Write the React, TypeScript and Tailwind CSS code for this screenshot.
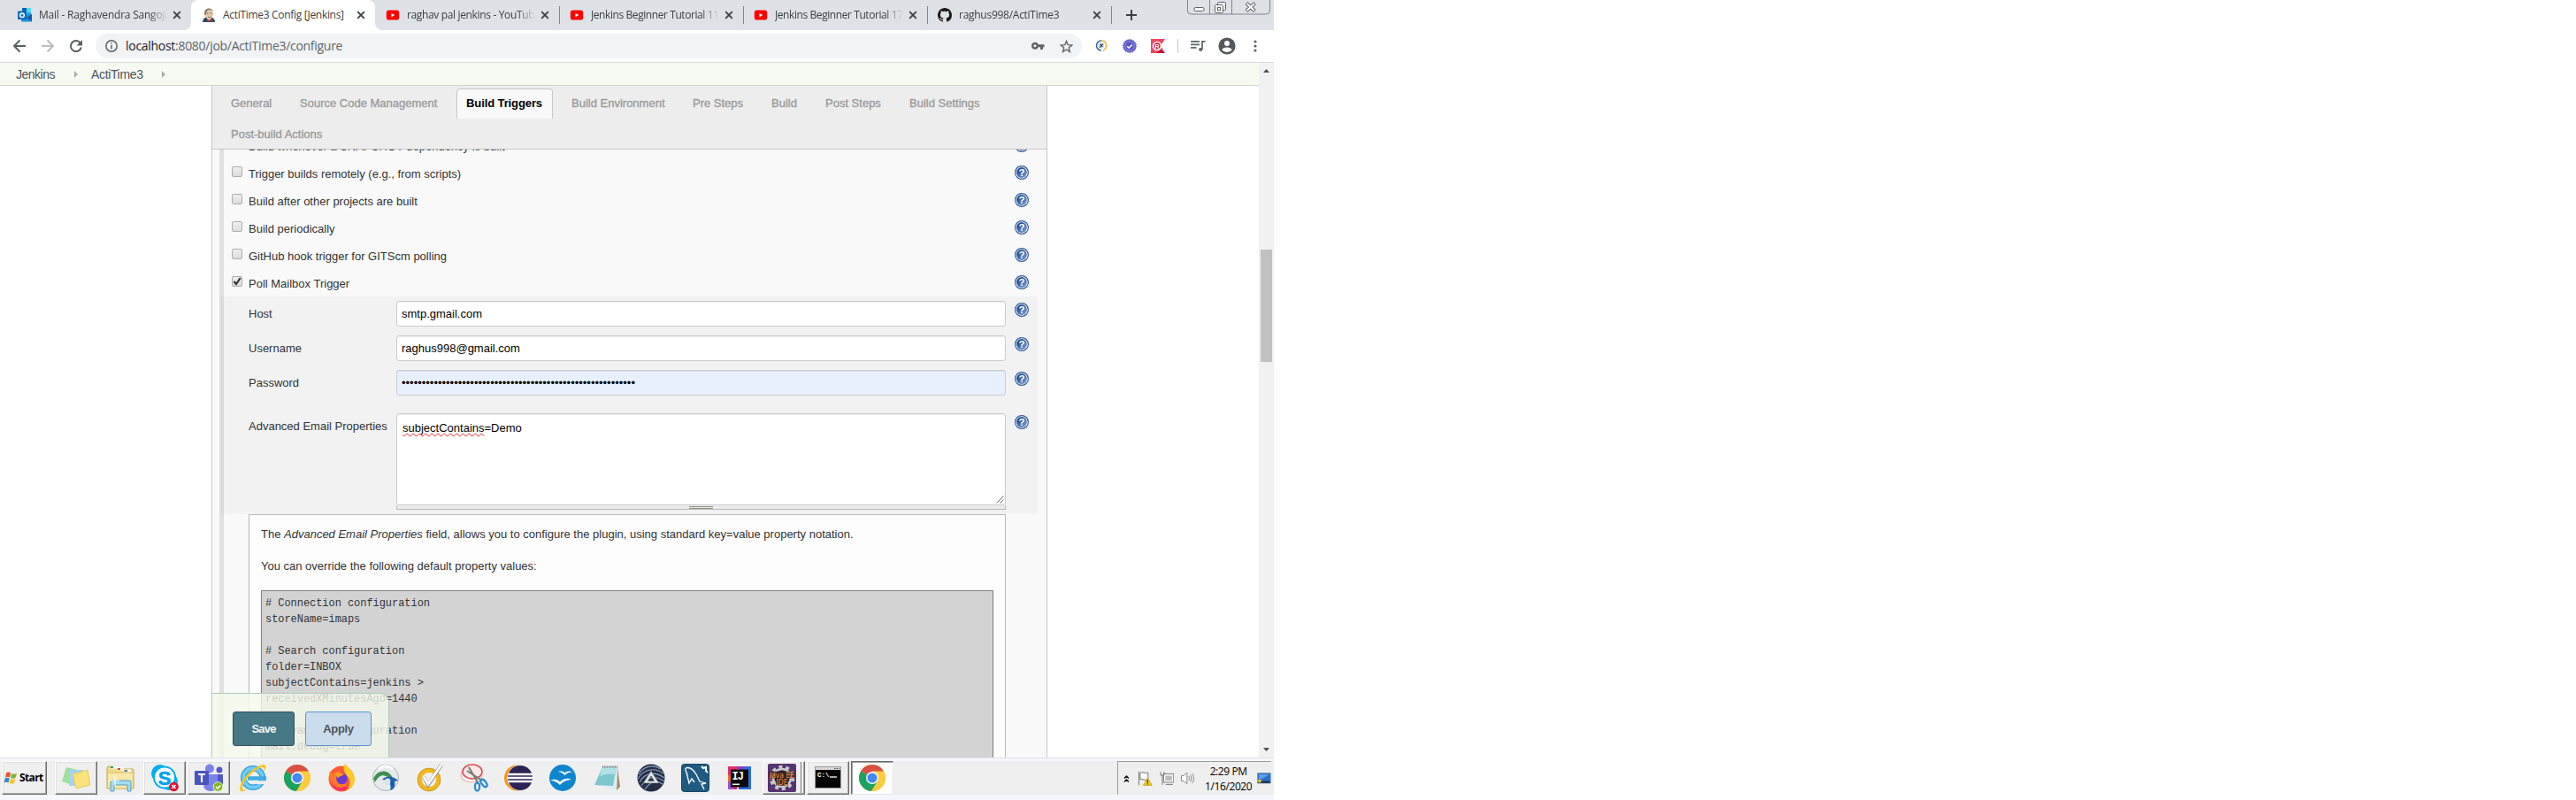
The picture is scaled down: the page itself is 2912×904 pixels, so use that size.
import React, { type ReactNode } from 'react';

const UI = "font-['Open_Sans','Noto_Sans',sans-serif]";
const PAGE = "font-['Liberation_Sans',Arial,sans-serif]";

/* ---------- small drawings ---------- */

function Cross() {
  return (
    <svg width="10" height="10" viewBox="0 0 10 10" className="shrink-0">
      <path d="M1.2 1.2 8.8 8.8M8.8 1.2 1.2 8.8" stroke="#3c4043" strokeWidth="1.9" />
    </svg>
  );
}

function Outlook() {
  return (
    <svg width="16" height="16" viewBox="0 0 16 16" className="shrink-0">
      <path d="M5 0h10v10H5z" fill="#28a8ea" />
      <path d="M5 0h5v5H5z" fill="#0a64ad" />
      <path d="M10 0h5v5h-5z" fill="#50d9ff" />
      <path d="M5 8l11-1v8.500H4z" fill="#1490df" />
      <path d="M16 7v8l-6-4z" fill="#0f5ba8" />
      <rect y="3.500" width="10" height="9.500" rx="1" fill="#0f6cbd" />
      <circle cx="5" cy="8.200" r="2.300" fill="none" stroke="#fff" strokeWidth="1.500" />
    </svg>
  );
}

function Jenkins() {
  return (
    <svg width="16" height="16" viewBox="0 0 16 16" className="shrink-0">
      <path d="M1 16c0-3 2-5 4-5.500h6c3 1 4 3 4 5.500z" fill="#33495f" />
      <path d="M5 10l3 5 3-4z" fill="#f4f1ec" />
      <ellipse cx="8.200" cy="6.500" rx="4.800" ry="6" fill="#e3c8aa" />
      <path d="M3.200 8C2.500 2.500 5 .5 8.200.5c2 0 4 1 4.800 3-2-1.500-4.500-2-6-1C5 4 5.200 6 4.500 8z" fill="#857a70" />
      <path d="M5.500 6h2M9.500 6h2M7 10c1 .8 2.500.8 3.500 0" stroke="#6b4b38" strokeWidth=".8" fill="none" />
      <path d="M6.500 12.500l2.500 1 3-1.300v3l-3-1-2.500 1z" fill="#d33833" />
    </svg>
  );
}

function YouTube() {
  return (
    <svg width="16" height="16" viewBox="0 0 16 16" className="shrink-0">
      <rect x=".8" y="2.600" width="14.400" height="11" rx="2.800" fill="#f00" />
      <path d="M6.500 5.900v4.400L10.300 8.100z" fill="#fff" />
    </svg>
  );
}

function GitHub() {
  return (
    <svg width="16" height="16" viewBox="0 0 16 16" className="shrink-0">
      <path
        fill="#1b1817"
        d="M8 0C3.580 0 0 3.580 0 8c0 3.540 2.290 6.530 5.470 7.590.4.070.55-.17.55-.38 0-.19-.01-.82-.01-1.490-2.010.37-2.530-.49-2.690-.94-.09-.23-.48-.94-.82-1.130-.28-.15-.68-.52-.01-.53.63-.01 1.080.58 1.230.82.72 1.210 1.870.87 2.330.66.070-.52.28-.87.51-1.070-1.780-.2-3.640-.89-3.640-3.950 0-.87.31-1.590.82-2.150-.08-.2-.36-1.020.08-2.120 0 0 .67-.21 2.200.82.64-.18 1.320-.27 2-.27s1.360.09 2 .27c1.530-1.040 2.200-.82 2.200-.82.44 1.100.16 1.920.08 2.120.51.56.82 1.270.82 2.150 0 3.070-1.870 3.750-3.650 3.950.29.25.54.73.54 1.480 0 1.070-.01 1.930-.01 2.200 0 .21.15.46.55.38A8.010 8.010 0 0 0 16 8c0-4.420-3.580-8-8-8z"
      />
    </svg>
  );
}

function Help() {
  return (
    <svg width="16" height="16" viewBox="0 0 16 16" className="shrink-0">
      <defs>
        <linearGradient id="helpFill" x1="0" y1="0" x2="1" y2="1">
          <stop offset="0.200" stopColor="#1f4a8c" />
          <stop offset="1" stopColor="#7ea6d8" />
        </linearGradient>
      </defs>
      <circle cx="8" cy="8" r="7.400" fill="#fff" stroke="#2f5a9b" strokeWidth="1.200" />
      <circle cx="8" cy="8" r="5.900" fill="url(#helpFill)" />
      <text x="8" y="12" textAnchor="middle" fontSize="11.500" fontWeight="700" fill="#fff" fontFamily="Liberation Sans, sans-serif">
        ?
      </text>
    </svg>
  );
}

/* ---------- browser chrome ---------- */

type Tab = { title: string; icon: ReactNode; active?: boolean; sep?: boolean; track: string };

const tabs: Tab[] = [
  { title: 'Mail - Raghavendra Sangoji', icon: <Outlook />, track: 'tracking-[-0.22px]' },
  { title: 'ActiTime3 Config [Jenkins]', icon: <Jenkins />, active: true, track: 'tracking-[-0.3px]' },
  { title: 'raghav pal jenkins - YouTube', icon: <YouTube />, sep: true, track: 'tracking-[-0.35px]' },
  { title: 'Jenkins Beginner Tutorial 11 -', icon: <YouTube />, sep: true, track: 'tracking-[-0.42px]' },
  { title: 'Jenkins Beginner Tutorial 17 -', icon: <YouTube />, sep: true, track: 'tracking-[-0.42px]' },
  { title: 'raghus998/ActiTime3', icon: <GitHub />, sep: true, track: 'tracking-[-0.27px]' },
];

function TabStrip() {
  return (
    <div className="flex h-[34px] bg-[#dee1e6] pl-[8px]">
      {tabs.map((t, i) => (
        <div key={i} className={`relative flex h-[34px] w-[208px] shrink-0 items-center pl-[12px] ${t.active ? 'rounded-t-[8px] bg-white' : ''}`}>
          {t.active && (
            <>
              <svg className="absolute bottom-0 -left-[8px]" width="8" height="8" viewBox="0 0 8 8"><path d="M8 0v8H0a8 8 0 0 0 8-8z" fill="#fff" /></svg>
              <svg className="absolute -right-[8px] bottom-0" width="8" height="8" viewBox="0 0 8 8"><path d="M0 0v8h8a8 8 0 0 1-8-8z" fill="#fff" /></svg>
            </>
          )}
          {t.icon}
          <div className={`ml-[8px] w-[145px] shrink-0 overflow-hidden text-[12px] leading-[18px] whitespace-nowrap text-[#3c4043] ${t.active ? '' : '[mask-image:linear-gradient(to_right,black_86%,transparent)]'} ${UI} ${t.track}`}>
            {t.title}
          </div>
          <span className="ml-[6px] flex"><Cross /></span>
          {t.sep && <div className="ml-[11px] h-[20px] w-px shrink-0 bg-[#80868b]" />}
        </div>
      ))}
      <svg className="mt-[11px] ml-[17px]" width="12" height="12" viewBox="0 0 12 12">
        <path d="M6 0v12M0 6h12" stroke="#3c4043" strokeWidth="2" />
      </svg>
      <svg className="ml-[57px]" width="94" height="18" viewBox="0 0 94 18" fill="none">
        <path d="M.5 0v12q0 4 4 4h85q4 0 4-4V0M25.500 0v16M50.500 0v16" stroke="#7f858c" />
        <rect x="8" y="8.500" width="11" height="4" rx="1.500" fill="#fff" stroke="#5b6067" />
        <rect x="34.500" y="2.500" width="9" height="9" rx="1" fill="#fff" stroke="#5b6067" />
        <rect x="31.500" y="5.500" width="9" height="9" rx="1" fill="#fff" stroke="#5b6067" />
        <rect x="34.500" y="8.500" width="3" height="3" stroke="#5b6067" />
        <path d="M67 3.500l9.500 9M76.500 3.500l-9.500 9" stroke="#5b6067" strokeWidth="4" />
        <path d="M67.500 4l8.500 8M76 4l-8.500 8" stroke="#fff" strokeWidth="2" />
      </svg>
    </div>
  );
}

function Toolbar() {
  return (
    <div className="flex h-[36px] items-center bg-white pl-[14px]">
      <svg width="80" height="16" viewBox="0 0 80 16" fill="none" strokeWidth="2">
        <path d="M15 8H2.500M8.500 1.500 2 8l6.500 6.500" stroke="#5a5e63" />
        <path d="M33 8h12.500M39.500 1.500 46 8l-6.500 6.500" stroke="#babcbe" />
        <path d="M77 4.800A6 6 0 1 0 77.800 9.500" stroke="#5a5e63" />
        <path d="M79 1v6.500h-6.500z" fill="#5a5e63" />
      </svg>
      <div className="ml-[14px] flex h-[28px] w-[1115px] items-center rounded-full bg-[#f1f3f4] pl-[11px]">
        <svg width="14" height="14" viewBox="0 0 14 14" fill="none" stroke="#5f6368" strokeWidth="1.500">
          <circle cx="7" cy="7" r="6.200" />
          <path d="M7 6v4.500M7 3.200v1.500" />
        </svg>
        <div className={`ml-[9px] w-[989px] text-[14px] leading-[20px] tracking-[-0.29px] whitespace-nowrap text-[#5f6368] ${UI}`}>
          <span className="text-[#202124]">localhost</span>:8080/job/ActiTime3/configure
        </div>
        <svg className="ml-[35px]" width="15" height="10" viewBox="0 0 15 10">
          <path d="M4 .8a4 4 0 1 0 3.800 5.400H10V9h3V6.200h1.500V3.200H7.800A4 4 0 0 0 4 .8zM4 6.200a1.500 1.500 0 1 1 0-3 1.500 1.500 0 0 1 0 3z" fill="#5f6368" />
        </svg>
        <svg className="ml-[17px]" width="15" height="15" viewBox="0 0 15 15">
          <path d="M7.500 1.500l1.700 4.200 4.600.3-3.500 3 1.100 4.400-3.900-2.400-3.900 2.400 1.100-4.400-3.500-3 4.600-.3z" fill="none" stroke="#5f6368" strokeWidth="1.400" />
        </svg>
      </div>
      <svg className="ml-[15px]" width="14" height="14" viewBox="0 0 14 14" fill="none">
        <path d="M7 1A5.500 5.500 0 1 0 7 12" stroke="#2d67ae" strokeWidth="1.500" />
        <path d="M7 1a5.500 5.500 0 0 1 3 10.200" stroke="#f3b535" strokeWidth="1.500" />
        <path d="M8.500 12l1.500 1.800V11" fill="#f3b535" />
        <circle cx="7" cy="6.500" r="3.200" fill="#bfe3f5" />
        <path d="M5 8.700l4-4M5.700 4.700l2.600 3.300" stroke="#334" strokeWidth="1.100" />
      </svg>
      <svg className="ml-[17px]" width="16" height="16" viewBox="0 0 16 16" fill="none">
        <circle cx="8" cy="8" r="7.200" fill="#5a55c8" stroke="#6f6ad6" strokeWidth="1.500" strokeDasharray="1.500 1" />
        <circle cx="8" cy="8" r="5.200" stroke="#a9a6ec" strokeWidth=".8" />
        <path d="M5.200 8.200l2 2 3.600-3.800" stroke="#fff" strokeWidth="1.500" />
      </svg>
      <svg className="ml-[16px]" width="16" height="16" viewBox="0 0 16 16">
        <path d="M0 0h16l-5 7.500 5 8.500H0z" fill="#f0455f" />
        <path d="M6 16l5-4 5 4z" fill="#c0122f" />
        <circle cx="7" cy="8" r="5.300" fill="#fff" />
        <circle cx="7" cy="8" r="3.700" fill="#c91435" />
        <text x="7" y="10.800" fontSize="7.500" fontWeight="700" textAnchor="middle" fill="#fff" fontFamily="Liberation Sans, sans-serif">R</text>
      </svg>
      <div className="ml-[14px] h-[16px] w-px bg-[#c4c7ca]" />
      <svg className="ml-[14px]" width="17" height="14" viewBox="0 0 17 14" fill="none" stroke="#5f6368" strokeWidth="1.700">
        <path d="M0 1.800h10M0 5.300h10M0 8.800h6.500M13 11V1.800h3.500" />
        <circle cx="11.200" cy="11" r="2.100" fill="#5f6368" stroke="none" />
      </svg>
      <svg className="ml-[14px]" width="20" height="20" viewBox="0 0 20 20">
        <circle cx="10" cy="10" r="9.600" fill="#54585d" />
        <circle cx="10" cy="7" r="3" fill="#fff" />
        <path d="M4.200 14.200c1.300-2 3.500-2.700 5.800-2.700s4.500.7 5.800 2.700A7 7 0 0 1 10 17a7 7 0 0 1-5.800-2.800z" fill="#fff" />
      </svg>
      <svg className="ml-[20px]" width="4" height="14" viewBox="0 0 4 14" fill="#5f6368">
        <circle cx="2" cy="2" r="1.600" /><circle cx="2" cy="7" r="1.600" /><circle cx="2" cy="12" r="1.600" />
      </svg>
    </div>
  );
}

/* ---------- Jenkins page ---------- */

function Crumb() {
  return (
    <svg width="4" height="8" viewBox="0 0 4 8"><path d="M0 0l4 4-4 4z" fill="#acaca8" /></svg>
  );
}

const navItems = [
  ['General', 'w-[78px]'],
  ['Source Code Management', 'w-[170px]'],
  ['Build Triggers', ''],
  ['Build Environment', 'w-[137px]'],
  ['Pre Steps', 'w-[89px]'],
  ['Build', 'w-[61px]'],
  ['Post Steps', 'w-[95px]'],
  ['Build Settings', 'w-[100px]'],
];

function ConfigNav() {
  return (
    <div className="h-[72px] border-b border-[#c8c8c8] bg-[#ededed] pl-[21px] text-[13px] leading-[17px] text-[#9b9b9b] [-webkit-text-stroke:0.35px_#9b9b9b]">
      <div className="flex h-[37px] pt-[3px]">
        {navItems.map(([name, w]) =>
          name === 'Build Triggers' ? (
            <div key={name} className="mr-[21px] ml-[7px] h-[34px] w-[109px] shrink-0 rounded-t-[4px] border border-b-0 border-[#c8c8c8] bg-[#f9f9f9] pt-[7px] pl-[10px] font-bold tracking-[-0.1px] whitespace-nowrap text-black [-webkit-text-stroke:0]">
              {name}
            </div>
          ) : (
            <div key={name} className={`shrink-0 pt-[8px] whitespace-nowrap ${w}`}>{name}</div>
          ),
        )}
      </div>
      <div className="pt-[9px]">Post-build Actions</div>
    </div>
  );
}

const triggers = [
  'Build whenever a SNAPSHOT dependency is built',
  'Trigger builds remotely (e.g., from scripts)',
  'Build after other projects are built',
  'Build periodically',
  'GitHub hook trigger for GITScm polling',
  'Poll Mailbox Trigger',
];

function TriggerRow({ label, checked }: { label: string; checked: boolean }) {
  return (
    <div className="flex h-[31px] pt-[7px] pl-[9px]">
      <div className="mt-px h-[12px] w-[12px] rounded-[2px] border border-[#acacac] bg-linear-to-b from-[#efefef] to-[#dcdcdc]">
        {checked && (
          <svg width="10" height="10" viewBox="0 0 10 10"><path d="M1.500 5l2.500 3L8.800 1" fill="none" stroke="#333" strokeWidth="2.200" /></svg>
        )}
      </div>
      <div className="ml-[7px] w-[866px] pt-px text-[13px] leading-[17px] text-[#333]">{label}</div>
      <Help />
    </div>
  );
}

function Field({ label, value, dots }: { label: string; value: string; dots?: boolean }) {
  return (
    <div className="flex h-[39px]">
      <div className="w-[167px] pt-[6px] text-[13px] leading-[17px]">{label}</div>
      <div className={`h-[29px] w-[689px] rounded-[3px] border border-[#ccc] pt-[5px] pl-[5px] text-[13px] leading-[17px] text-black shadow-[inset_0_1px_1px_rgba(0,0,0,0.075)] ${dots ? 'bg-[#e8f0fe]' : 'bg-white'}`}>
        {value}
      </div>
      <div className="mt-[2px] ml-[10px]"><Help /></div>
    </div>
  );
}

const pre = `# Connection configuration
storeName=imaps

# Search configuration
folder=INBOX
subjectContains=jenkins >
receivedXMinutesAgo=1440

# Javamail configuration
mail.debug=true`;

function MailboxPanel() {
  return (
    <div className="-ml-[3px] h-[246px] w-[923px] bg-black/[0.027] pt-[5px] pl-[31px] text-[#333]">
      <Field label="Host" value="smtp.gmail.com" />
      <Field label="Username" value="raghus998@gmail.com" />
      <Field label="Password" value={'•'.repeat(58)} dots />
      <div className="mt-[10px] flex">
        <div className="w-[167px] pt-[6px] text-[13px] leading-[17px] whitespace-nowrap">Advanced Email Properties</div>
        <div className="w-[689px]">
          <div className="flex h-[104px] justify-between rounded-[3px] border border-[#ccc] bg-white pt-[7px] pl-[6px] text-[13px] leading-[17px] text-black shadow-[inset_0_1px_1px_rgba(0,0,0,0.075)]">
            <div>
              <span className="underline decoration-[#e8262a] decoration-wavy decoration-[0.8px] underline-offset-[1px] [text-decoration-skip-ink:none]">subjectContains</span>=Demo
            </div>
            <svg className="mr-px mb-px self-end" width="9" height="9" viewBox="0 0 9 9"><path d="M.5 8.500l8-8M4.500 8.500l4-4" stroke="#555" strokeWidth=".9" /></svg>
          </div>
          <div className="flex h-[5px] justify-center border border-t-0 border-[#b9b9b9] bg-[#ececec]">
            <div className="mt-px h-[3px] w-[27px] border-y border-[#8f8f85]" />
          </div>
        </div>
        <div className="mt-[2px] ml-[10px]"><Help /></div>
      </div>
    </div>
  );
}

function HelpBox() {
  return (
    <div className="ml-[28px] h-[320px] w-[856px] border border-[#bbb] bg-[#fdfdfd] pt-[13px] pl-[13px] text-[13px] leading-[18px] text-[#333]">
      <p>The <i>Advanced Email Properties</i> field, allows you to configure the plugin, using standard key=value property notation.</p>
      <p className="mt-[18px]">You can override the following default property values:</p>
      <pre className="mt-[18px] h-[260px] w-[828px] border border-[#7f7f7f] bg-[#d3d3d3] pt-[5px] pl-[4px] font-['Liberation_Mono',monospace] text-[12px] leading-[18px] tracking-[-0.05px]">{pre}</pre>
    </div>
  );
}

function JenkinsPage() {
  return (
    <div className={`flex h-[786px] shrink-0 border-t border-[#d9dbe0] ${PAGE}`}>
      <div className="relative h-[785px] w-[1423px] overflow-hidden">
        <div className="flex h-[26px] items-center border-b border-[#d3d6cc] bg-[#f6faf2] pl-[18px] text-[14px] leading-[18px] text-[#4d545d]">
          <span className="w-[66px] tracking-[-0.5px]">Jenkins</span>
          <Crumb />
          <span className="ml-[15px] w-[80px] tracking-[-0.35px]">ActiTime3</span>
          <Crumb />
        </div>
        <div className="ml-[239px] h-[759px] w-[945px] overflow-hidden border-x border-[#c8c8c8] bg-[#f9f9f9]">
          <ConfigNav />
          <div className="h-[687px] overflow-hidden pl-[8px]">
            <div className="-mt-[20px] border-l-[5px] border-[#e0e0e0]">
              {triggers.map((t) => (
                <TriggerRow key={t} label={t} checked={t === 'Poll Mailbox Trigger'} />
              ))}
              <MailboxPanel />
              <HelpBox />
            </div>
          </div>
        </div>
        <div className="absolute bottom-0 left-[239px] flex h-[73px] w-[201px] gap-[12px] rounded-tr-[10px] border border-b-0 border-[#abcebd] bg-[#f5f9eb]/80 pt-[20px] pl-[23px] text-[13px] font-bold">
          <div className="flex h-[39px] w-[70px] items-center justify-center rounded-[3px] border border-[#30525f] bg-[#467886] tracking-[-0.8px] text-[#f4f7f8]">Save</div>
          <div className="flex h-[39px] w-[75px] items-center justify-center rounded-[3px] border border-[#5c92d2] bg-[#cbdcec] tracking-[-0.3px] text-[#4d545d]">Apply</div>
        </div>
      </div>
      <div className="flex w-[17px] flex-col items-center bg-[#f1f1f1]">
        <svg className="mt-[7px]" width="7" height="4" viewBox="0 0 7 4"><path d="M0 4l3.500-4L7 4z" fill="#505050" /></svg>
        <div className="mt-[200px] h-[127px] w-[13px] bg-[#c1c1c1]" />
        <svg className="mt-auto mb-[7px]" width="7" height="4" viewBox="0 0 7 4"><path d="M0 0l3.500 4L7 0z" fill="#505050" /></svg>
      </div>
    </div>
  );
}

/* ---------- taskbar ---------- */

function Icon({ children }: { children: ReactNode }) {
  return <svg width="32" height="32" viewBox="0 0 32 32" fill="none">{children}</svg>;
}

const Chrome = () => (
  <Icon>
    <circle cx="16" cy="16" r="15" fill="#fccb3f" />
    <path d="M16 16 3 8.500A15 15 0 0 1 29 8.500z" fill="#d94f44" />
    <path d="M29 8.500H16v7z" fill="#d94f44" />
    <path d="M3 8.500A15 15 0 0 0 15 31l7-11.500L16 16z" fill="#1ba261" />
    <path d="M29 8.500H16l6.500 11.500L15 31A15 15 0 0 0 29 8.500z" fill="#fccb3f" />
    <circle cx="16" cy="16" r="7" fill="#fff" />
    <circle cx="16" cy="16" r="5.600" fill="#4688f1" />
  </Icon>
);

const taskIcons: { style: 'plain' | 'raised' | 'stack' | 'pressed'; icon: ReactNode }[] = [
  { style: 'raised', icon: (
    <Icon>
      <path d="M5 4l17 4-5 18L0 20z" fill="#9fe0a0" /><path d="M9 7h15v18H8z" fill="#a6d2f6" />
      <path d="M12 12l17-5 3 17-16 4z" fill="#fae27a" stroke="#e5c64f" strokeWidth=".8" />
    </Icon>) },
  { style: 'plain', icon: (
    <Icon>
      <path d="M1 5q0-2 2-2h9l2 3h16q1 0 1 2v20H1z" fill="#f2dc8c" stroke="#c9a646" />
      <path d="M5 4h8M13 6h7M21 8h7" stroke="#fff" strokeWidth="3" />
      <path d="M5 4h3" stroke="#2aa34a" strokeWidth="2" /><path d="M13 6h3" stroke="#d34b31" strokeWidth="2" /><path d="M21 8h3" stroke="#3380d3" strokeWidth="2" />
      <path d="M1.500 10h29v18h-29z" fill="#f8e8a8" stroke="#d9bd63" />
      <path d="M5 31V21q0-2 2-2h19q2 0 2 2v10h-4v-7H9v7z" fill="#a4dcf2" stroke="#559fc4" />
      <path d="M10 13v12M5 19h10" stroke="#fff" strokeWidth="1.200" />
    </Icon>) },
  { style: 'raised', icon: (
    <Icon>
      <circle cx="11" cy="11" r="10" fill="#00aff0" /><circle cx="21" cy="20" r="10" fill="#00aff0" /><circle cx="16" cy="15.500" r="13" fill="#00aff0" />
      <circle cx="16" cy="15.500" r="11" fill="#fff" />
      <text x="16" y="23.500" fontSize="22" fontWeight="700" textAnchor="middle" fill="#00a5e8" stroke="#00a5e8" strokeWidth=".6" fontFamily="Liberation Sans, sans-serif">S</text>
      <circle cx="26.500" cy="26" r="5.300" fill="#df1233" /><path d="M24.500 24l4 4M28.500 24l-4 4" stroke="#fff" strokeWidth="1.500" />
    </Icon>) },
  { style: 'raised', icon: (
    <Icon>
      <circle cx="17" cy="5.500" r="5" fill="#7b83eb" /><circle cx="28" cy="7" r="3.500" fill="#5059c9" />
      <path d="M22 12h10v10q0 6-7 6z" fill="#5059c9" /><path d="M10 12h16v11q0 8-8 8t-8-8z" fill="#7b83eb" />
      <rect y="8" width="16" height="16" rx="1" fill="#4b53bc" /><path d="M4 12h8M8 12v9" stroke="#fff" strokeWidth="2.200" />
      <circle cx="26.500" cy="26" r="5.300" fill="#84b81b" stroke="#e8f5d0" /><path d="M24 26l2 2 3.200-3.500" stroke="#fff" strokeWidth="1.600" />
    </Icon>) },
  { style: 'plain', icon: (
    <Icon>
      <circle cx="16" cy="16" r="10.800" stroke="#2f9fda" strokeWidth="6.500" /><circle cx="16" cy="16" r="10.800" stroke="#6fcdf5" strokeWidth="4" />
      <path d="M10 16.500h21" stroke="#3fabe2" strokeWidth="4.500" /><path d="M18 19.500h14v3.500H20z" fill="#efefef" />
      <path d="M2 31C-2 26 10 5 28 1c4 0 2 5 0 8 1-4 0-6-3-5C12 9 3 24 4 28q1 2 5 0c-3 3-6 4-7 3z" fill="#f8c51c" />
    </Icon>) },
  { style: 'plain', icon: <Chrome /> },
  { style: 'plain', icon: (
    <Icon>
      <circle cx="16" cy="17" r="14.500" fill="#ff5a36" />
      <path d="M20 0c4 5 11 9 11 18 0 6-5 12-11 13 5-4 7-9 4-15-3-5-8-8-4-16z" fill="#ffc928" />
      <path d="M3 8l3 4 6-4 2 5c-3 8 3 11 8 9-1 4-6 6-11 4C5 24 1 15 3 8z" fill="#ff7a22" />
      <path d="M3 21c3 9 14 13 22 6l-6-1c-6 3-13 0-16-5z" fill="#f32f66" />
      <circle cx="16.500" cy="17" r="6.300" fill="#6d3ad0" /><path d="M8 11c4-3 8 0 11 1-3 2-5 2-7 4z" fill="#ff9a1f" />
    </Icon>) },
  { style: 'plain', icon: (
    <Icon>
      <circle cx="16" cy="16" r="14.500" fill="#e6eaec" stroke="#aab0b5" />
      <path d="M2 17C7 6 19 6 24 16c2 5 1 10-1 13 1-6 0-10-4-13C14 11 8 13 4 21z" fill="#3f9150" />
      <path d="M12 18c4-5 13-4 18 1l-4 1c1 3 0 7-2 9l-3 1c2-6-1-11-9-12z" fill="#1c5fae" />
      <path d="M15 18c2-2 5-2 6 0 1 3 0 5-2 8-3-2-5-4-4-8z" fill="#dde4ea" />
      <path d="M8 6c5-4 11-4 16 0" stroke="#fff" strokeWidth="3" />
    </Icon>) },
  { style: 'plain', icon: (
    <Icon>
      <circle cx="15" cy="18" r="10.500" fill="#f1f1f1" stroke="#f2b81d" strokeWidth="5" /><circle cx="15" cy="18" r="12.900" stroke="#b98310" strokeWidth=".7" />
      <path d="M9 15l5 9L29 1" stroke="#9b9b9b" strokeWidth="4.200" /><path d="M9 15l5 8L29 1" stroke="#fff" strokeWidth="2.800" />
    </Icon>) },
  { style: 'plain', icon: (
    <Icon>
      <ellipse cx="13" cy="13" rx="12" ry="8" stroke="#f3b4b4" strokeWidth="1.200" />
      <ellipse cx="14" cy="9" rx="11" ry="8" fill="#f6e8e8" stroke="#e2474b" strokeWidth="1.500" />
      <path d="M10 4l10 17M8 8l17 11" stroke="#777" strokeWidth="2" />
      <ellipse cx="19.500" cy="26" rx="2.600" ry="4.500" stroke="#2d8dc8" strokeWidth="2.300" /><ellipse cx="27" cy="22" rx="2.500" ry="4.800" transform="rotate(-38 27 22)" stroke="#2d8dc8" strokeWidth="2.300" />
    </Icon>) },
  { style: 'plain', icon: (
    <Icon>
      <circle cx="14.500" cy="16" r="14.500" fill="#f7941e" /><circle cx="18" cy="16" r="14.500" fill="#efefef" /><circle cx="18" cy="16" r="14" fill="#2c2255" />
      <path d="M4 12h28M3 16h29M4 20h28" stroke="#fff" strokeWidth="2.300" />
    </Icon>) },
  { style: 'plain', icon: (
    <Icon>
      <circle cx="16" cy="16" r="15" fill="#0e85cd" />
      <path d="M11 9c3-1 6-.5 7.500 1.500C21 8 24 8 27 9.500c-4 0-6 1-8.500 3.500C16 10.500 14 9.500 11 9zM2 19c4-2 8-1.500 11 1.500 4-4 9-4.500 13-2.500-6 .5-9 2-13 6-3-3-6-5-11-5z" fill="#fff" />
    </Icon>) },
  { style: 'plain', icon: (
    <Icon>
      <path d="M28 4l3 22-4 4z" fill="#a88a60" /><path d="M11 3h17l-1 27-23-6z" fill="#d9eef1" /><path d="M11 4h16l-4 21-21-1z" fill="#7dc5cf" />
      <path d="M11 4h16l-2 8c-6-1-11 0-17 2z" fill="#b1e0e6" /><path d="M11 3.500h17" stroke="#777" strokeWidth="1.800" strokeDasharray="1.300 1" />
    </Icon>) },
  { style: 'plain', icon: (
    <Icon>
      <circle cx="16" cy="16" r="15.500" fill="#262f45" />
      <path d="M2 12C7 3 18 0 27 6M1 17C7 7 19 3 30 11M3 21C9 10 20 8 31 16M5 25C12 14 21 13 31 20M9 29c7-10 13-11 20-6" stroke="#8ba3c8" strokeWidth="1.100" />
      <path d="M16 8l9 14H7zM16 14l-3.500 5.500h7z" fill="#dfe4e8" fillRule="evenodd" stroke="#444" strokeWidth=".5" />
    </Icon>) },
  { style: 'plain', icon: (
    <Icon>
      <rect x=".5" y=".5" width="31" height="31" rx="3" fill="#205a80" stroke="#164561" />
      <path d="M5 5c5-2 9 2 12 7l4 8 7 2-5 1 3 6M5 5c-1 3 2 5 2 9l2 8 3-5 3 4" stroke="#fff" strokeWidth="1.300" />
      <path d="M23 3l2 2 3-1v4l2 2" stroke="#fff" strokeWidth="2" />
    </Icon>) },
  { style: 'plain', icon: (
    <Icon>
      <path d="M3 3h14l-4 26H3z" fill="#e52c6b" /><path d="M15 3h14v26H15z" fill="#2b6de0" /><path d="M13 3h10l-6 8z" fill="#8a3bc5" /><path d="M3 16h6v13H3z" fill="#9b50c9" /><path d="M3 12l6 4-6 5z" fill="#f5692a" />
      <rect x="6" y="6.500" width="20" height="20" fill="#0a0a0a" />
      <text x="7.500" y="17.500" fontSize="12" fontWeight="700" fill="#fff" letterSpacing="-1" fontFamily="Liberation Mono, monospace">IJ</text>
      <path d="M8 23.300h8" stroke="#fff" strokeWidth="1.500" />
    </Icon>) },
  { style: 'stack', icon: (
    <Icon>
      <rect width="32" height="32" rx="2" fill="#553470" />
      <circle cx="16" cy="16" r="12.500" stroke="#c9c9c9" strokeWidth="3.500" strokeDasharray="4 3.850" /><circle cx="16" cy="16" r="10" fill="#2c1d33" stroke="#c9c9c9" strokeWidth="2.500" />
      <path d="M1 8.500h30v8H1zM9 16h14v8.500H9z" fill="#3a2330" fillOpacity=".75" />
      <g fill="#ff8a1c" fontFamily="DejaVu Sans Condensed, DejaVu Sans, sans-serif" fontSize="8.500" textAnchor="middle">
        <text x="16" y="15.500">Java EE</text><text x="16" y="23.500">IDE</text>
      </g>
    </Icon>) },
  { style: 'raised', icon: (
    <Icon>
      <rect x="1.500" y="3.500" width="29" height="24" fill="#050505" stroke="#999" /><path d="M2 5.500h28" stroke="#d8d8d8" strokeWidth="3" />
      <path d="M23 5.500h6" stroke="#555" strokeDasharray="1.500 1" />
      <text x="4" y="15" fontSize="7.500" fontWeight="700" fill="#fff" fontFamily="Liberation Mono, monospace">C:\</text><path d="M18 15h8" stroke="#fff" strokeWidth="1.300" />
    </Icon>) },
  { style: 'pressed', icon: <Chrome /> },
];

const cellStyle = {
  plain: 'border-transparent',
  raised: 'border-t-white border-l-white border-r-[#6b6b6b] border-b-[#6b6b6b] shadow-[inset_-1px_-1px_0_#a9a9a9,inset_1px_1px_0_#e0e0e0]',
  stack: 'border-t-white border-l-white border-r-[#6b6b6b] border-b-[#6b6b6b] pr-[4px] shadow-[inset_-1px_-1px_0_#a9a9a9,inset_-3px_0_0_#efefef,inset_-4px_0_0_#777]',
  pressed: 'border-t-[#6b6b6b] border-l-[#6b6b6b] border-r-[#e8e8e8] border-b-[#e8e8e8] bg-white shadow-[inset_1px_1px_0_#a0a0a0]',
};

function Taskbar() {
  return (
    <div className="h-[48px] shrink-0 border-t border-[#e2e2e2] bg-[#f4f7fb] pt-[3px]">
      <div className="flex h-[38px] bg-[#efefef] pl-[2px]">
        <div className={`flex h-[38px] w-[51px] items-center border pl-px ${cellStyle.raised}`}>
          <svg width="16" height="16" viewBox="0 0 16 16" className="shrink-0">
            <path d="M3 2.500c2-1.500 3.500-1 5 0L7 7.500c-1.500-1-3-1-5 0z" fill="#e4572e" /><path d="M9 3c2 1 3.500 1 6 0l-1.500 5c-2 1-3.500 1-5.500 0z" fill="#7db83a" />
            <path d="M1.700 8.500c2-1 3.500-1 5 0l-1.200 5c-1.500-1-3-1-5 0z" fill="#3c86d1" /><path d="M7.700 9c2 1 3.500 1 5.500 0l-1.200 5c-2 1-3.500 1-5.500 0z" fill="#f6c32c" />
          </svg>
          <span className={`ml-[2px] text-[12px] font-bold tracking-[-0.6px] text-black ${UI}`}>Start</span>
        </div>
        <div className="ml-[9px] flex gap-[2px]">
          {taskIcons.map((t, i) => (
            <div key={i} className={`flex h-[38px] w-[48px] items-center justify-center border ${cellStyle[t.style]}`}>{t.icon}</div>
          ))}
        </div>
        <div className="ml-[253px] flex w-[174px] items-center border-t border-l border-[#9c9c9c] pl-[6px]">
          <svg width="7" height="10" viewBox="0 0 7 10" fill="none" stroke="#111" strokeWidth="1.500"><path d="M1 4.500 3.500 2 6 4.500M1 8.500 3.500 6 6 8.500" /></svg>
          <svg className="ml-[9px]" width="17" height="17" viewBox="0 0 17 17">
            <path d="M1.500.8v15.500M3 2c3-1.500 5 1.500 9 0v8c-4 1.500-6-1.500-9 0z" fill="#fdfdfd" stroke="#777" />
            <path d="M11.500 8l5 8.500h-10z" fill="#f5cf1b" stroke="#b8940c" strokeWidth=".7" /><path d="M11.500 10.500v3M11.500 14.300v1.200" stroke="#222" strokeWidth="1.300" />
          </svg>
          <svg className="ml-[8px]" width="17" height="17" viewBox="0 0 17 17" fill="none" stroke="#777">
            <rect x="4.500" y="3.500" width="11.500" height="9.500" fill="#fff" /><rect x="6.500" y="5.500" width="7.500" height="5.500" fill="#bbb" stroke="none" /><path d="M7 15.500h8M3 9v7M1 1v4h4V1M3 5v4" />
          </svg>
          <svg className="ml-[7px]" width="17" height="17" viewBox="0 0 17 17" fill="none" stroke="#888">
            <path d="M1.500 5.500h2.500L8 2v13l-4-3.500H1.500z" fill="#fff" /><path d="M10 6q1.500 2.500 0 5M12 4.500q2.500 4 0 8M14 3q3.500 5.500 0 11" />
          </svg>
          <div className={`ml-[10px] w-[56px] text-center text-[12px] leading-[17px] tracking-[-0.4px] whitespace-nowrap text-black ${UI}`}>
            2:29 PM<br />1/16/2020
          </div>
          <svg className="ml-[5px]" width="16" height="13" viewBox="0 0 16 13">
            <rect x=".5" y=".5" width="15" height="11.500" fill="#2b70cf" stroke="#8497ae" /><path d="M1 9.500h14V12H1z" fill="#24364e" /><circle cx="3" cy="9.500" r="2" fill="#e2c33f" /><path d="M2 2h12l-8 5H2z" fill="#5d9cec" />
          </svg>
        </div>
      </div>
    </div>
  );
}

export default function App() {
  return (
    <div className="h-[904px] w-[2912px] overflow-hidden bg-white">
      <div className="flex h-[904px] w-[1440px] flex-col">
        <TabStrip />
        <Toolbar />
        <JenkinsPage />
        <Taskbar />
      </div>
    </div>
  );
}
